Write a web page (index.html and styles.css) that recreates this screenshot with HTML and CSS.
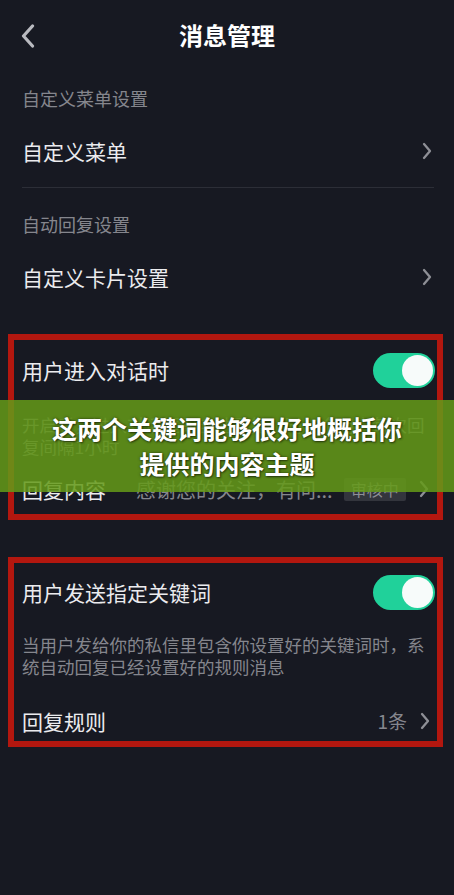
FILE: index.html
```html
<!DOCTYPE html>
<html lang="zh">
<head>
<meta charset="utf-8">
<link rel="stylesheet" href="styles.css">
</head>
<body>
<div class="page">
  <header class="header">
    <div class="back">
      <svg width="14" height="24" viewBox="0 0 14 24"><polyline points="11.5,2 2.5,12 11.5,22" fill="none" stroke="#b9bac0" stroke-width="3.2" stroke-linecap="round" stroke-linejoin="round"/></svg>
    </div>
    <h1 class="title">消息管理</h1>
    <div></div>
  </header>

  <div class="label first">自定义菜单设置</div>
  <div class="row menu-row">
    <span class="row-text">自定义菜单</span>
    <svg class="chev" width="10" height="18" viewBox="0 0 10 18"><polyline points="2,2 8,9 2,16" fill="none" stroke="#8e8f96" stroke-width="2.3" stroke-linecap="round" stroke-linejoin="round"/></svg>
  </div>
  <div class="divider"></div>

  <div class="label second">自动回复设置</div>
  <div class="row menu-row">
    <span class="row-text">自定义卡片设置</span>
    <svg class="chev" width="10" height="18" viewBox="0 0 10 18"><polyline points="2,2 8,9 2,16" fill="none" stroke="#8e8f96" stroke-width="2.3" stroke-linecap="round" stroke-linejoin="round"/></svg>
  </div>

  <section class="box box1">
    <div class="row toggle-row">
      <span class="row-text">用户进入对话时</span>
      <span class="toggle"><span class="knob"></span></span>
    </div>
    <p class="desc d1">开启后，进入对话框即自动回复，同一个用户每次回复间隔1小时</p>
    <div class="row reply-row">
      <span class="row-text">回复内容</span>
      <span class="value">感谢您的关注，有问...</span>
      <span class="badge">审核中</span>
      <svg class="chev" width="10" height="18" viewBox="0 0 10 18"><polyline points="2,2 8,9 2,16" fill="none" stroke="#8e8f96" stroke-width="2.3" stroke-linecap="round" stroke-linejoin="round"/></svg>
    </div>
  </section>

  <section class="box box2">
    <div class="row toggle-row2">
      <span class="row-text">用户发送指定关键词</span>
      <span class="toggle"><span class="knob"></span></span>
    </div>
    <p class="desc d2">当用户发给你的私信里包含你设置好的关键词时，系统自动回复已经设置好的规则消息</p>
    <div class="row rule-row">
      <span class="row-text">回复规则</span>
      <span class="count">1条</span>
      <svg class="chev" width="10" height="18" viewBox="0 0 10 18"><polyline points="2,2 8,9 2,16" fill="none" stroke="#8e8f96" stroke-width="2.3" stroke-linecap="round" stroke-linejoin="round"/></svg>
    </div>
  </section>

  <div class="overlay">
    <p class="overlay-text">这两个关键词能够很好地概括你<br>提供的内容主题</p>
  </div>
</div>
</body>
</html>
```

FILE: styles.css
```css
* { box-sizing: border-box; }
html, body {
  margin: 0;
  padding: 0;
  background: #171922;
}
body {
  font-family: "Noto Sans CJK SC", "Noto Sans", sans-serif;
  color: #e9e9ec;
}
.page {
  position: relative;
  width: 454px;
  height: 895px;
  background: #171922;
  overflow: hidden;
}
.header {
  height: 70px;
  display: grid;
  grid-template-columns: 1fr auto 1fr;
  align-items: center;
}
.back {
  padding-left: 21px;
  padding-top: 2px;
  display: flex;
  align-items: center;
}
.title {
  margin: 0;
  font-size: 24px;
  font-weight: 700;
  color: #ffffff;
  line-height: 30px;
  letter-spacing: 0;
}
.label {
  font-size: 18px;
  line-height: 24px;
  height: 24px;
  color: #85868d;
  padding-left: 22px;
}
.label.first { margin-top: 16px; }
.label.second { margin-top: 24px; }
.row {
  display: flex;
  align-items: center;
  height: 50px;
  padding: 0 22px;
}
.menu-row { margin-top: 16px; }
.row-text {
  font-size: 21px;
  color: #ebebee;
  white-space: nowrap;
}
.chev {
  margin-left: auto;
  flex: none;
}
.divider {
  height: 1px;
  margin: 11px 20px 0 22px;
  background: #2c2e37;
}
.box {
  width: 435px;
  margin-left: 8px;
  border: 6px solid #b3170f;
}
.box1 { margin-top: 32px; height: 186px; }
.box2 { margin-top: 37px; height: 190px; }
.box .row {
  padding: 0 7px 0 8px;
}
.toggle-row { height: 60px; padding-right: 2px !important; }
.toggle-row2 { height: 58px; padding-right: 2px !important; }
.toggle {
  margin-left: auto;
  width: 62px;
  height: 35px;
  border-radius: 18px;
  background: #20d19a;
  display: flex;
  align-items: center;
  justify-content: flex-end;
  padding-right: 2px;
  flex: none;
}
.knob {
  width: 31px;
  height: 31px;
  border-radius: 50%;
  background: #f7fbfa;
}
.desc {
  margin: 0;
  padding: 0 8px;
  font-size: 17.5px;
  line-height: 22px;
  color: #85868d;
}
.d1 { margin-top: 14px; }
.d2 { margin-top: 13px; }
.reply-row { height: 50px !important; margin-top: 6px; }
.value {
  margin-left: 30px;
  font-size: 20px;
  color: #85868d;
  white-space: nowrap;
}
.badge {
  margin-left: 11px;
  font-size: 16px;
  line-height: 23px;
  height: 23px;
  padding: 0 7px;
  background: #33353d;
  color: #8e8f96;
  border-radius: 2px;
}
.reply-row .chev { margin-left: 13px; }
.rule-row { height: 45px !important; margin-top: 18px; padding-top: 4px !important; }
.count {
  margin-left: auto;
  font-size: 19px;
  color: #85868d;
}
.rule-row .chev { margin-left: 13px; }
.overlay {
  position: absolute;
  left: 0;
  top: 400px;
  width: 454px;
  height: 92px;
  background: rgba(100, 154, 24, 0.86);
  display: flex;
  align-items: center;
  justify-content: center;
}
.overlay-text {
  margin: 0;
  text-align: center;
  font-size: 25px;
  line-height: 35px;
  font-weight: 700;
  color: #ffffff;
  text-shadow: 0 0 3px rgba(0,0,0,0.55), 1px 1px 2px rgba(0,0,0,0.45);
}
```
